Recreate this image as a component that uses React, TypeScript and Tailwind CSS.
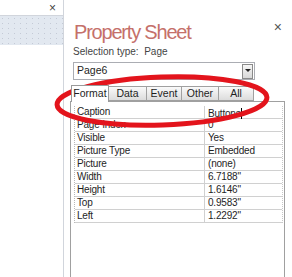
export default function App() {
  const rows: [string, string][] = [
    ['Caption', 'Buttons'],
    ['Page Index', '0'],
    ['Visible', 'Yes'],
    ['Picture Type', 'Embedded'],
    ['Picture', '(none)'],
    ['Width', '6.7188"'],
    ['Height', '1.6146"'],
    ['Top', '0.9583"'],
    ['Left', '1.2292"'],
  ];
  const tabs = ['Format', 'Data', 'Event', 'Other', 'All'];
  const tabWidths = ['w-[38px]', 'w-[39px]', 'w-[36px]', 'w-[38px]', 'w-[36px]'];

  return (
    <div
      className="relative flex h-[277px] w-[292px] overflow-hidden bg-white text-[10px] text-[#1e1e1e]"
      style={{ fontFamily: '"Liberation Sans", Arial, sans-serif' }}
    >
      {/* left pane */}
      <div className="flex w-[64px] shrink-0 flex-col border-r border-gray-300">
        <div className="flex h-[16px] items-center justify-end border-b border-gray-300 pr-[7px]">
          <span className="text-[12px] leading-[12px] text-[#444]">×</span>
        </div>
        <div className="h-[29px] bg-slate-200">
          <svg width="63" height="29" className="block">
            <defs>
              <pattern id="dots" width="6" height="5" patternUnits="userSpaceOnUse">
                <rect x="2" y="2" width="1" height="1" fill="#c4cad6" />
              </pattern>
            </defs>
            <rect width="63" height="29" fill="url(#dots)" />
          </svg>
        </div>
      </div>

      {/* property sheet */}
      <div className="flex flex-1 flex-col">
        <div className="flex h-[44px] items-end justify-between pl-[10px] pr-[10px]">
          <span className="text-[20px] leading-[24px] tracking-[-1.2px] text-[#c5706a]">Property Sheet</span>
          <span className="mb-[10px] text-[14px] leading-none text-[#555]">×</span>
        </div>
        <div className="mt-[1px] pl-[9px] text-[10px] leading-[13px] text-[#444]">Selection type:&nbsp; Page</div>

        <div className="ml-[9px] mt-[4px] flex h-[18px] w-[182px] items-center justify-between border border-[#abadb3] pl-[3px] pr-[1px]">
          <span className="text-[10.5px] text-[#1e1e1e]">Page6</span>
          <div className="flex h-[15px] w-[11px] items-center justify-center border border-[#8a8a8a] bg-[linear-gradient(#f6f6f6,#d8d8d8)]">
            <svg width="6" height="4" viewBox="0 0 6 4">
              <path d="M0 0h6L3 3z" fill="#222" />
            </svg>
          </div>
        </div>

        {/* tabs */}
        <div className="ml-[7px] mt-[5px] flex h-[16px] items-end">
          {tabs.map((t, i) => (
            <div
              key={t}
              className={
                i === 0
                  ? `${tabWidths[i]} relative z-10 -mb-px flex h-[17px] items-center justify-center border border-b-0 border-[#9a9a9a] bg-white text-[10.5px]`
                  : `${tabWidths[i]} -ml-px flex h-[15px] items-center justify-center border border-[#a0a0a0] bg-[linear-gradient(#fafafa,#dcdcdc)] text-[10.5px]`
              }
            >
              {t}
            </div>
          ))}
        </div>

        <div className="ml-[6px] mr-[7px] flex-1 border-l border-r border-t border-[#a0a0a0] pl-[3px] pr-px pt-[4px]">
          <div className="border-l border-r border-dotted border-l-[#b8b8b8] border-r-[#c8c8c8]">
            {rows.map(([k, v], i) => (
              <div key={k} className="flex h-[13px] border-b border-[#d0d0d0] leading-[12px] tracking-[-0.2px]">
                <div className="w-[130px] truncate border-r border-[#d0d0d0] pl-[2px]">{k}</div>
                <div className="flex-1 pl-[3px]">
                  {v}
                  {i === 0 && <span className="inline-block h-[11px] w-px translate-y-[2px] bg-black" />}
                </div>
              </div>
            ))}
          </div>
        </div>
      </div>

      {/* red annotation ellipse */}
      <svg className="pointer-events-none absolute left-0 top-0" width="292" height="277">
        <ellipse cx="162" cy="101" rx="105" ry="24" transform="rotate(-2 162 101)" fill="none" stroke="#e3141c" strokeWidth="5" />
      </svg>
    </div>
  );
}
